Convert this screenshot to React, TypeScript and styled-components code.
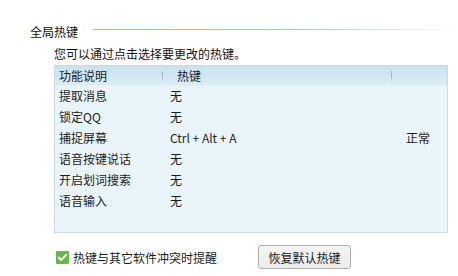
import React from "react";
import styled, { createGlobalStyle } from "styled-components";

const GlobalStyle = createGlobalStyle`
  html, body {
    margin: 0;
    padding: 0;
    background: #ffffff;
  }
  body {
    font-family: "Microsoft YaHei", "Noto Sans CJK SC", "Noto Sans", sans-serif;
    font-size: 12px;
    color: #1b1b1b;
  }
`;

const Page = styled.div`
  width: 458px;
  height: 276px;
  overflow: hidden;
  padding-top: 24px;
  box-sizing: border-box;
`;

const SectionHeader = styled.div`
  display: flex;
  align-items: flex-start;
  padding-left: 30px;
  height: 16px;
  line-height: 16px;
`;

const SectionTitle = styled.span`
  color: #111;
`;

const SectionLine = styled.div`
  flex: 1;
  height: 1px;
  margin-top: 5px;
  margin-left: 15px;
  background: linear-gradient(to right, #9db9cd 0%, #a9c2d4 55%, #ffffff 100%);
`;

const Content = styled.div`
  padding-left: 54px;
  margin-top: 6px;
`;

const Hint = styled.div`
  height: 16px;
  line-height: 16px;
  color: #111;
`;

const Table = styled.div`
  margin-top: 3px;
  width: 394px;
  height: 168px;
  box-sizing: border-box;
  border: 1px solid #c4dcea;
  background: #eaf5fb;
`;

const HeaderRow = styled.div`
  display: grid;
  grid-template-columns: 107px 229px 1fr;
  height: 19px;
  background: linear-gradient(to bottom, #cae2ef 0%, #dcedf6 100%);
  border-bottom: 1px solid #e2f0f7;
`;

const HeaderCell = styled.div<{ $pad: number; $sep?: boolean }>`
  position: relative;
  padding-left: ${(p) => p.$pad}px;
  line-height: 19px;
  color: #1b1b1b;
  &::before {
    content: "";
    display: ${(p) => (p.$sep ? "block" : "none")};
    position: absolute;
    left: 0;
    top: 2px;
    width: 1px;
    height: 14px;
    background: linear-gradient(to bottom, #d6e8f2, #7eaecb 50%, #d6e8f2);
  }
`;

const Row = styled.div`
  display: grid;
  grid-template-columns: 107px 229px 1fr;
  height: 21px;
  line-height: 20px;
`;

const Cell = styled.div<{ $pad: number }>`
  padding-left: ${(p) => p.$pad}px;
  white-space: nowrap;
  color: #1b1b1b;
`;

const Footer = styled.div`
  display: flex;
  align-items: center;
  margin-top: 12px;
  padding-left: 2px;
`;

const CheckLabel = styled.label`
  display: flex;
  align-items: center;
  gap: 4px;
  width: 202px;
  color: #1b1b1b;
`;

const CheckBox = styled.span`
  display: inline-flex;
  align-items: center;
  justify-content: center;
  width: 13px;
  height: 13px;
  border-radius: 1px;
  background: #66b848;
`;

const Button = styled.button`
  width: 93px;
  height: 24px;
  padding: 0;
  border: 1px solid #adadad;
  border-radius: 3px;
  background: linear-gradient(to bottom, #f4f4f4, #ececec);
  font-family: inherit;
  font-size: 12px;
  color: #1b1b1b;
  box-sizing: border-box;
`;

const rows = [
  { name: "提取消息", key: "无", status: "" },
  { name: "锁定QQ", key: "无", status: "" },
  { name: "捕捉屏幕", key: "Ctrl + Alt + A", status: "正常" },
  { name: "语音按键说话", key: "无", status: "" },
  { name: "开启划词搜索", key: "无", status: "" },
  { name: "语音输入", key: "无", status: "" },
];

export default function App() {
  return (
    <>
      <GlobalStyle />
      <Page>
        <SectionHeader>
          <SectionTitle>全局热键</SectionTitle>
          <SectionLine />
        </SectionHeader>
        <Content>
          <Hint>您可以通过点击选择要更改的热键。</Hint>
          <Table>
            <HeaderRow>
              <HeaderCell $pad={4}>功能说明</HeaderCell>
              <HeaderCell $pad={15} $sep>
                热键
              </HeaderCell>
              <HeaderCell $pad={15} $sep />
            </HeaderRow>
            {rows.map((r) => (
              <Row key={r.name}>
                <Cell $pad={4}>{r.name}</Cell>
                <Cell $pad={8}>{r.key}</Cell>
                <Cell $pad={15}>{r.status}</Cell>
              </Row>
            ))}
          </Table>
          <Footer>
            <CheckLabel>
              <CheckBox>
                <svg width="11" height="11" viewBox="0 0 11 11">
                  <path
                    d="M1.8 5.6 L4.3 8 L9.3 2.6"
                    fill="none"
                    stroke="#ffffff"
                    strokeWidth="1.9"
                    strokeLinecap="round"
                    strokeLinejoin="round"
                  />
                </svg>
              </CheckBox>
              热键与其它软件冲突时提醒
            </CheckLabel>
            <Button>恢复默认热键</Button>
          </Footer>
        </Content>
      </Page>
    </>
  );
}
